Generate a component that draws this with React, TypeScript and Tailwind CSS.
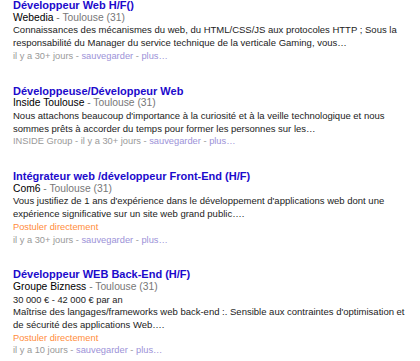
const jobs = [
  {
    title: 'Développeur Web H/F()',
    company: 'Webedia',
    location: 'Toulouse (31)',
    snippet:
      'Connaissances des mécanismes du web, du HTML/CSS/JS aux protocoles HTTP ; Sous la responsabilité du Manager du service technique de la verticale Gaming, vous…',
    age: 'il y a 30+ jours',
  },
  {
    title: 'Développeuse/Développeur Web',
    company: 'Inside Toulouse',
    location: 'Toulouse (31)',
    snippet:
      "Nous attachons beaucoup d'importance à la curiosité et à la veille technologique et nous sommes prêts à accorder du temps pour former les personnes sur les…",
    source: 'INSIDE Group',
    age: 'il y a 30+ jours',
  },
  {
    title: 'Intégrateur web /développeur Front-End (H/F)',
    company: 'Com6',
    location: 'Toulouse (31)',
    snippet:
      "Vous justifiez de 1 ans d'expérience dans le développement d'applications web dont une expérience significative sur un site web grand public….",
    apply: true,
    age: 'il y a 30+ jours',
  },
  {
    title: 'Développeur WEB Back-End (H/F)',
    company: 'Groupe Bizness',
    location: 'Toulouse (31)',
    salary: '30 000 € - 42 000 € par an',
    snippet:
      "Maîtrise des langages/frameworks web back-end :. Sensible aux contraintes d'optimisation et de sécurité des applications Web….",
    apply: true,
    age: 'il y a 10 jours',
  },
]

type Job = (typeof jobs)[number] & { source?: string; salary?: string; apply?: boolean }

function JobRow({ job }: { job: Job }) {
  return (
    <div className="mb-[22px] leading-[12.7px]">
      <a href="#" className="block text-[11px] font-bold text-[#1c0acc] no-underline">
        {job.title}
      </a>
      <div className="text-[10.3px] text-black">
        {job.company} <span className="text-[#777]">- {job.location}</span>
      </div>
      {job.salary ? <div className="text-[9.3px] text-[#222]">{job.salary}</div> : null}
      <div className="text-[9.5px] text-[#222]">{job.snippet}</div>
      {job.apply ? <div className="text-[9.3px] text-[#ff8c3c]">Postuler directement</div> : null}
      <div className="text-[9.3px] text-[#999]">
        {job.source ? `${job.source} - ` : ''}
        {job.age} - <a href="#" className="text-[#9c92d8]">sauvegarder</a> -{' '}
        <a href="#" className="text-[#9c92d8]">plus…</a>
      </div>
    </div>
  )
}

export default function App() {
  return (
    <div className="h-[361px] w-[420px] overflow-hidden bg-white pl-[13px] pr-[8px] pt-0 font-['Liberation_Sans',Arial,sans-serif]">
      <div className="-mt-px">
        {jobs.map((j) => (
          <JobRow key={j.title} job={j as Job} />
        ))}
      </div>
    </div>
  )
}
